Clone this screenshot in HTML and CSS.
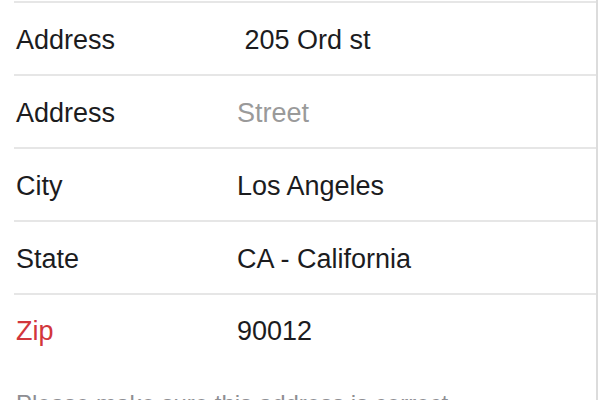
FILE: index.html
```html
<!DOCTYPE html>
<html lang="en">
<head>
    <meta charset="UTF-8">
    <meta name="viewport" content="width=device-width, initial-scale=1.0">
    <title>Shipping Address</title>
    <link rel="stylesheet" href="styles.css">
</head>
<body>
    <div class="sheet">
        <div class="form">
            <div class="row">
                <span class="label">Address</span>
                <span class="value">&nbsp;205 Ord st</span>
            </div>
            <div class="row">
                <span class="label">Address</span>
                <span class="value placeholder">Street</span>
            </div>
            <div class="row">
                <span class="label">City</span>
                <span class="value">Los Angeles</span>
            </div>
            <div class="row">
                <span class="label">State</span>
                <span class="value">CA - California</span>
            </div>
            <div class="row">
                <span class="label error">Zip</span>
                <span class="value">90012</span>
            </div>
        </div>
        <p class="note">Please make sure this address is correct.</p>
    </div>
</body>
</html>
```

FILE: styles.css
```css
body {
    font-family: "Liberation Sans", Arial, sans-serif;
    margin: 0;
    padding: 0;
    background-color: #fff;
    color: #1c1c1e;
}

.sheet {
    width: 598px;
    height: 400px;
    box-sizing: border-box;
    padding-left: 14px;
    padding-top: 1px;
    border-right: 2px solid #dcdcdc;
    overflow: hidden;
}

.row {
    display: flex;
    align-items: center;
    height: 73px;
    box-sizing: border-box;
    border-top: 2px solid #e6e6e6;
    padding-left: 2px;
    padding-top: 4px;
    font-size: 27px;
}

.row:last-child {
    height: 71px;
}

.label {
    width: 221px;
    flex-shrink: 0;
}

.label.error {
    color: #d2363c;
}

.placeholder {
    color: #9a9a9a;
}

.note {
    margin: 26px 0 0 2px;
    font-size: 24px;
    color: #8e8e93;
    white-space: nowrap;
}
```
